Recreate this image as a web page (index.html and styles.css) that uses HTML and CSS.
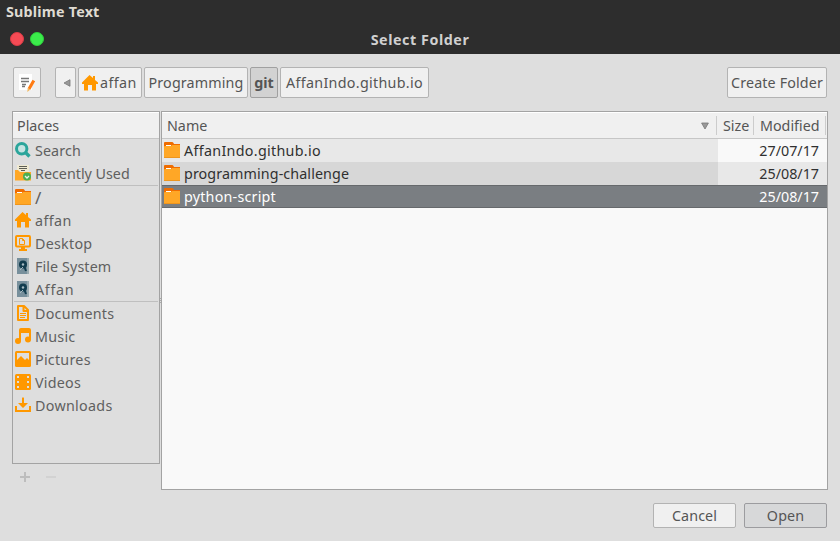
FILE: index.html
```html
<!DOCTYPE html>
<html lang="en">
<head>
<meta charset="utf-8">
<title>Select Folder</title>
<link rel="stylesheet" href="styles.css">
</head>
<body>
<svg class="sprite" aria-hidden="true">
  <symbol id="folder" viewBox="0 0 16 16"><path fill="#ef6c00" d="M0 1q0-1 1-1h7q1 0 1.500 1l.5 1h6v8H0z"/><path fill="#fff" d="M2 3h5v1.500H2z"/><path fill="#ffa726" d="M0 5q0-1 1-1h6l1-1h8v13H0z"/><path fill="#ed951e" d="M0 15h16v1H0z"/></symbol>
  <symbol id="home" viewBox="0 0 16 16"><path fill="#ff9800" d="M7.500 0 0 7.500V9h2v6.500h4V10h4v5.500h4V9h2V7.500L13 5V1h-2v2z"/></symbol>
  <symbol id="search" viewBox="0 0 16 16"><circle cx="6.700" cy="6.700" r="5.200" fill="#c5e4e2" stroke="#2ba59b" stroke-width="3"/><path d="m10.500 10.500 4 4" stroke="#2ba59b" stroke-width="3.400"/></symbol>
  <symbol id="recent" viewBox="0 0 16 16"><path fill="#f0ead2" d="M2 0h12v8H2z"/><path stroke="#5d5e55" d="M4 1.500h8M4 3.500h8M6 5.500h4"/><path fill="#ffa726" d="M0 5h3l2 2h11v8.500H0z"/><circle cx="12" cy="11.500" r="4" fill="#4caf50"/><path fill="none" stroke="#e8f5e9" stroke-width="1.300" d="m10 11 2 2 2-2"/></symbol>
  <symbol id="desktop" viewBox="0 0 16 16"><rect x="1" y="1" width="14" height="10.500" rx="1" fill="none" stroke="#ff9800" stroke-width="2"/><path fill="none" stroke="#ff9800" d="M4.500 3.500h3l2 2v4h-5zM7.500 3.500v2h2"/><path fill="#ff9800" d="M6 12h4v2h2v2H4v-2h2z"/></symbol>
  <symbol id="disk" viewBox="0 0 16 16"><path fill="#78909c" d="M2 0h10v16H2z"/><path fill="#9bacb1" d="M12 0h2v16h-2z"/><circle cx="8" cy="6.500" r="4" fill="#123c4e"/><path stroke="#123c4e" stroke-width="2" d="m9 8 2 5"/><circle cx="8" cy="6.500" r="1.200" fill="#a7bbc2"/><path stroke="#a7bbc2" d="m5 12 3-3"/></symbol>
  <symbol id="document" viewBox="0 0 16 16"><path fill="none" stroke="#ff9800" stroke-width="2" stroke-linejoin="round" d="M3 1h6l4 4v10H3zM8.500 1.500V6H13"/><path stroke="#ff9800" d="M5 8.500h6M5 10.500h6M5 12.500h5"/></symbol>
  <symbol id="music" viewBox="0 0 16 16"><path fill="#ff9800" d="M4 2q0-2 2-2h8q2 0 2 2v9.500h-2V5H6v8H4z"/><circle cx="3" cy="13" r="3" fill="#ff9800"/><circle cx="13" cy="11.500" r="3" fill="#ff9800"/></symbol>
  <symbol id="picture" viewBox="0 0 16 16"><rect width="16" height="16" rx="1.500" fill="#ff9800"/><path fill="#dedede" d="M2 2h12v7l-2-2-2 2-4-4-4 4z"/></symbol>
  <symbol id="video" viewBox="0 0 16 16"><rect width="16" height="16" rx="1.500" fill="#ff9800"/><path fill="#dedede" d="M2 2h2v2H2zm0 5h2v2H2zm0 5h2v2H2zM12 2h2v2h-2zm0 5h2v2h-2zm0 5h2v2h-2z"/></symbol>
  <symbol id="download" viewBox="0 0 16 16"><path fill="#ff9800" d="M7 1q1-1.500 2 0v5h4l-5 5-5-5h4zM0 9h2v4h12V9h2v6H0z"/></symbol>
</svg>

<div class="panel bold"><span class="t-app">Sublime Text</span></div>
<header class="titlebar">
  <div class="lights"><i class="light red"></i><i class="light green"></i></div>
  <h1 class="bold"><span class="t-title">Select Folder</span></h1>
</header>

<main>
  <nav class="toolbar">
    <button class="btn edit" aria-label="Type a file name"><svg width="16" height="18" viewBox="0 0 16 18"><path fill="#fff" d="M0 0h13v16H0z"/><path stroke="#777" stroke-width="1.300" d="M2 4.500h8M2 7.500h8M3 10.500h4M3 12.500h3"/><path stroke="#ff7b13" stroke-width="3" d="M14.800 6.500 10 15"/><path fill="#f1b75c" d="m8.700 14 2.600 1.500-3 2.500z"/></svg></button>
    <div class="path">
      <button class="btn back" aria-label="Back"><svg width="8" height="8" viewBox="0 0 8 8"><path fill="#999" stroke="#777" stroke-width=".8" d="M7 .7v6.600L1 4z"/></svg></button>
      <button class="btn p-home"><svg class="icon"><use href="#home"/></svg><span class="t-affan">affan</span></button>
      <button class="btn p-prog"><span class="t-prog">Programming</span></button>
      <button class="btn p-git active bold"><span class="t-git">git</span></button>
      <button class="btn p-repo"><span class="t-repo">AffanIndo.github.io</span></button>
    </div>
    <button class="btn create"><span class="t-create">Create Folder</span></button>
  </nav>

  <section class="browser">
    <aside>
      <div class="places">
        <div class="head"><span class="t-places">Places</span></div>
        <ul>
          <li><svg class="icon"><use href="#search"/></svg><span class="t-search">Search</span></li>
          <li><svg class="icon"><use href="#recent"/></svg><span class="t-recent">Recently Used</span></li>
          <li class="rule"><svg class="icon"><use href="#folder"/></svg><span class="t-root">/</span></li>
          <li><svg class="icon"><use href="#home"/></svg><span class="t-affan">affan</span></li>
          <li><svg class="icon"><use href="#desktop"/></svg><span class="t-desktop">Desktop</span></li>
          <li><svg class="icon"><use href="#disk"/></svg><span class="t-fs">File System</span></li>
          <li><svg class="icon"><use href="#disk"/></svg><span class="t-affan2">Affan</span></li>
          <li class="rule"><svg class="icon"><use href="#document"/></svg><span class="t-docs">Documents</span></li>
          <li><svg class="icon"><use href="#music"/></svg><span class="t-music">Music</span></li>
          <li><svg class="icon"><use href="#picture"/></svg><span class="t-pics">Pictures</span></li>
          <li><svg class="icon"><use href="#video"/></svg><span class="t-videos">Videos</span></li>
          <li><svg class="icon"><use href="#download"/></svg><span class="t-down">Downloads</span></li>
        </ul>
      </div>
      <div class="tools"><svg width="40" height="10" viewBox="0 0 40 10"><path fill="#bdbdbd" d="M4 0h2v4h4v2H6v4H4V6H0V4h4z"/><path fill="#d2d2d2" d="M26 4h10v2H26z"/></svg></div>
    </aside>
    <div class="grip"><i></i><i></i><i></i></div>
    <div class="files">
      <div class="head cols">
        <div class="c-name"><span class="t-name">Name</span><svg width="8" height="8" viewBox="0 0 8 8"><path fill="#999" stroke="#777" stroke-width=".8" d="M.6 1h6.800L4 7z"/></svg></div>
        <div class="c-size"><span class="t-size">Size</span></div>
        <div class="c-mod"><span class="t-mod">Modified</span></div>
      </div>
      <div class="row"><div class="cell"><svg class="icon"><use href="#folder"/></svg><span class="t-repo">AffanIndo.github.io</span></div><div class="date"><span class="t-date">27/07/17</span></div></div>
      <div class="row even"><div class="cell"><svg class="icon"><use href="#folder"/></svg><span class="t-chal">programming-challenge</span></div><div class="date"><span class="t-date">25/08/17</span></div></div>
      <div class="row selected"><div class="cell"><svg class="icon"><use href="#folder"/></svg><span class="t-py">python-script</span></div><div class="date"><span class="t-date">25/08/17</span></div></div>
    </div>
  </section>

  <footer>
    <button class="btn action"><span class="t-cancel">Cancel</span></button>
    <button class="btn action default"><span class="t-open">Open</span></button>
  </footer>
</main>
</body>
</html>
```
FILE: styles.css
```css
* { box-sizing: border-box; }
body {
  margin: 0;
  width: 840px;
  height: 541px;
  overflow: hidden;
  background: #dedede;
  color: #555;
  font: 14.3px/22px "Noto Sans", "Open Sans", sans-serif;
  white-space: nowrap;
}
.sprite { display: none; }
.icon { width: 16px; height: 16px; flex: none; }
li .icon, .cell .icon { margin-bottom: 1px; }
.bold { font-weight: 700; }
span { display: block; }

.panel { height: 24px; padding: 1px 0 0 6px; background: #2d2d2d; color: #dfdbd2; }
.titlebar { display: grid; grid-template-columns: 60px 1fr 60px; align-items: center; height: 30px; background: #2d2d2d; color: #d0d0d0; }
.lights { display: flex; gap: 6px; padding-left: 10px; }
.light { width: 14px; height: 14px; border-radius: 50%; }
.red { background: #f54b55; border: 1px solid #db3b45; }
.green { background: #3bec4b; border: 1px solid #2cd03b; }
h1 { margin: 2px 0 0; font-size: inherit; text-align: center; }

main { padding: 13px 12px 0; }
.toolbar { display: flex; height: 31px; padding-left: 1px; }
.path { display: flex; gap: 2px; margin-left: 14px; }
.btn {
  display: flex; align-items: center; justify-content: center;
  height: 31px; padding: 0;
  border: 1px solid #b3b3b3; border-radius: 2px;
  background: #f0f0f0; color: #555; font: inherit;
}
.edit { width: 28px; }
.back { width: 21px; padding-left: 2px; }
.p-home { width: 64px; justify-content: flex-start; padding-left: 3px; gap: 2px; }
.p-prog { width: 104px; }
.p-git { width: 28px; }
.p-repo { width: 149px; }
.btn.active { background: #d2d2d2; border-color: #a0a0a0; font-weight: 700; }
.create { width: 100px; margin: 0 1px 0 auto; }

.browser { display: flex; margin-top: 13px; height: 379px; }
aside { width: 148px; }
.places { height: 353px; border: 1px solid #a3a3a3; }
.head { height: 27px; padding: 3px 0 0 4px; border-bottom: 1px solid #c6c6c6; box-shadow: inset 0 1px #fff; background: #f0f0f0; }
ul { margin: 0; padding: 0 1px; list-style: none; }
li { display: flex; align-items: center; gap: 4px; height: 23px; padding-left: 1px; }
li.rule { height: 24px; border-top: 1px solid #bfbfbf; }
.places ul { color: #606060; }
.tools { padding: 8px 0 0 8px; line-height: 0; }
.grip { display: flex; flex-direction: column; justify-content: center; gap: 1px; width: 1px; }
.grip i { width: 1px; height: 1px; background: #aaa; }
.files { width: 667px; border: 1px solid #a3a3a3; background: #f9f9f9; color: #303030; }
.cols { display: flex; padding: 0; color: #555; }
.cols > div { display: flex; align-items: center; height: 19px; margin-top: 4px; border-right: 1px solid #ccc; }
.c-name { width: 555px; padding: 0 7px 0 5px; justify-content: space-between; }
.c-size { width: 37px; padding-left: 6px; }
.c-mod { width: 72px; padding-left: 6px; }
.row { display: flex; height: 23px; }
.cell { display: flex; align-items: center; gap: 4px; width: 556px; padding-left: 2px; background: #e8e8e8; }
.date { display: flex; flex: 1; align-items: center; justify-content: flex-end; padding-right: 8px; }
.even { background: #e8e8e8; }
.even .cell { background: #d7d7d7; }
.selected { background: #7a7e82; color: #fff; box-shadow: inset 0 1px #66696c, inset 0 -1px #66696c; }
.selected .cell { background: none; }

footer { display: flex; justify-content: flex-end; gap: 8px; margin-top: 13px; padding-right: 1px; }
.action { width: 83px; height: 25px; }
.default { background: #d7d8d9; border-color: #9c9c9f; }

/* Tracking per label */
.t-app { letter-spacing: .22px; }
.t-title { letter-spacing: .55px; }
.t-affan { letter-spacing: .4px; }
.t-affan2 { letter-spacing: .7px; }
.t-prog, .t-create { letter-spacing: .13px; }
.t-repo { letter-spacing: .31px; }
.t-chal { letter-spacing: .1px; }
.t-py { letter-spacing: .22px; }
.t-search { letter-spacing: .1px; }
.t-root { font-size: 17px; }
.t-desktop, .t-docs, .t-videos { letter-spacing: .25px; }
.t-fs { letter-spacing: .1px; }
.t-music, .t-pics { letter-spacing: .25px; }
.t-down { letter-spacing: .3px; }
.t-cancel, .t-open { letter-spacing: .1px; }
```
